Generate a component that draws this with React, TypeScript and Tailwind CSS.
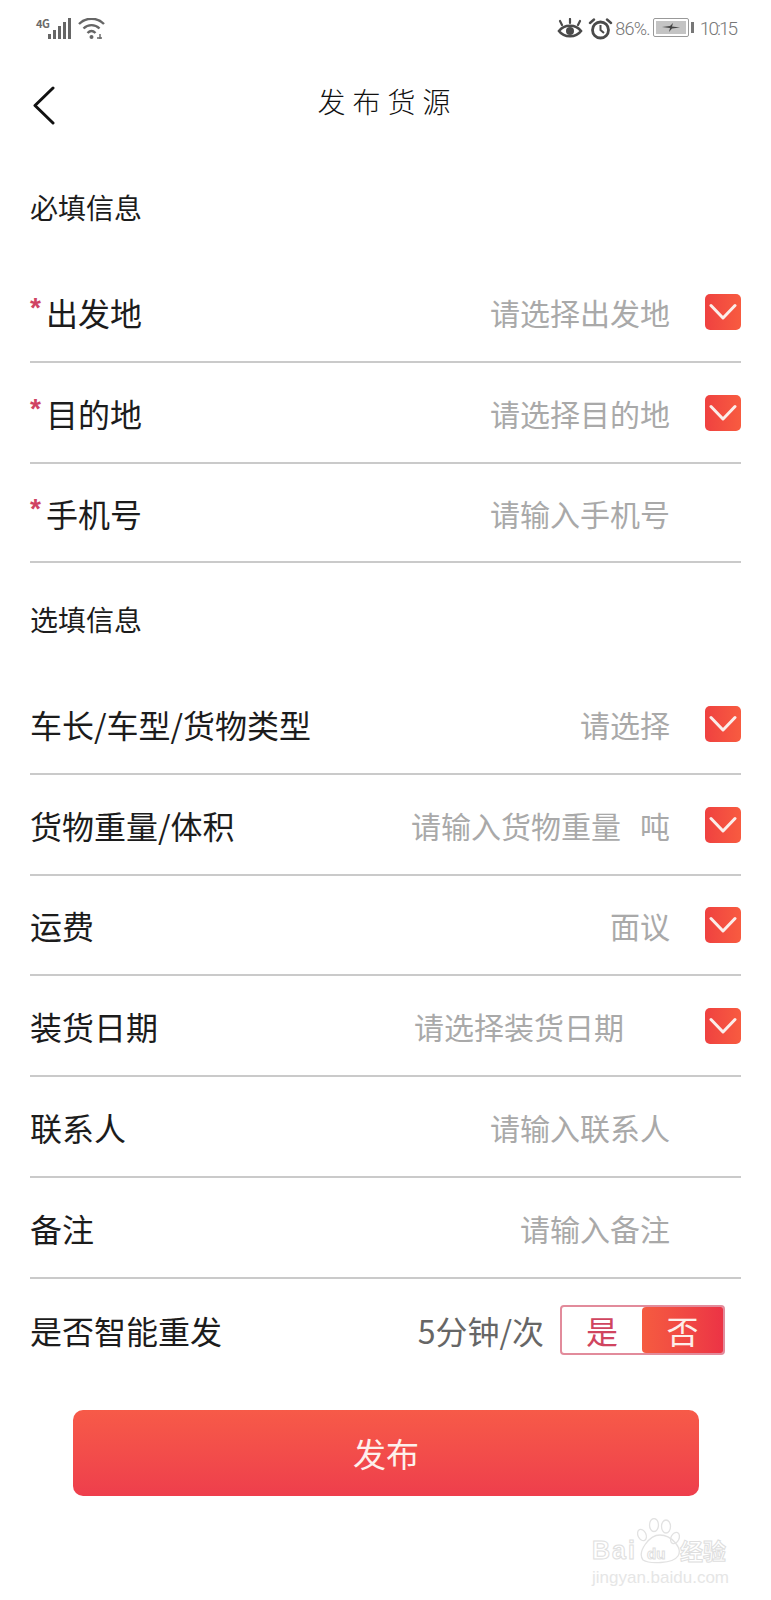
const font = { fontFamily: '"Noto Sans CJK SC", "Liberation Sans", sans-serif' }
const thin = { fontFamily: 'Roboto, "Liberation Sans", sans-serif' }

function Chevron() {
  return (
    <div className="ml-[35px] flex h-[36px] w-[36px] shrink-0 items-center justify-center rounded-[5px] bg-gradient-to-r from-[#ef4140] to-[#f85b40]">
      <svg width="28" height="18" viewBox="0 0 28 18" fill="none">
        <path d="M2 2.5 L14 15 L26 2.5" stroke="#fbeeea" strokeWidth="3" strokeLinecap="round" strokeLinejoin="round" />
      </svg>
    </div>
  )
}

function Row({
  label,
  required,
  hint,
  unit,
  arrow,
  hintClass,
  heightClass = "h-[101px]",
}: {
  label: string
  required?: boolean
  hint: string
  unit?: string
  arrow?: boolean
  hintClass?: string
  heightClass?: string
}) {
  return (
    <div className={`flex items-center border-b-2 border-[#cacaca] ${heightClass}`}>
      {required && (
        <span className="mt-[-8px] w-[16px] text-[28px] font-bold leading-none text-[#cf4463]" style={{ fontFamily: '"Liberation Sans", sans-serif' }}>
          *
        </span>
      )}
      <span className="text-[32px] leading-none text-[#1c1c1c]">{label}</span>
      <div className={`ml-auto flex items-center text-[30px] leading-none text-[#a9a9a9] ${arrow ? "" : "mr-[71px]"}`}>
        <span className={hintClass}>{hint}</span>
        {unit && <span className="ml-[19px]">{unit}</span>}
      </div>
      {arrow && <Chevron />}
    </div>
  )
}

function StatusBar() {
  return (
    <div className="flex h-[56px] items-start justify-between pl-[36px] pr-[35px] pt-[18px] text-[#6a6a6a]">
      <div className="flex items-start">
        <span className="mt-[-1px] w-[12px] text-[11px] font-bold leading-[12px] tracking-[-0.5px]">4G</span>
        <svg width="24" height="22" viewBox="0 0 24 22" fill="#666">
          <rect x="0" y="16" width="3" height="5" />
          <rect x="5" y="12" width="3" height="9" />
          <rect x="10" y="8" width="3" height="13" />
          <rect x="15" y="4" width="3" height="17" />
          <rect x="20" y="0" width="3" height="21" />
        </svg>
        <svg width="28" height="22" viewBox="0 0 28 22" fill="none" stroke="#666" strokeWidth="2.4" className="ml-[6px]">
          <path d="M1 6 C8 -1 19 -1 26 6" />
          <path d="M5.5 10.5 C10 6 17 6 21.5 10.5" />
          <path d="M9.5 15 C12 12.5 15 12.5 17.5 15" />
          <circle cx="13.5" cy="19" r="2" fill="#666" stroke="none" />
          <path d="M19 20 L24 20 M22 16 L22 21" strokeWidth="1.4" />
        </svg>
      </div>
      <div className="flex items-start">
        <svg width="26" height="22" viewBox="0 0 26 22" fill="none" stroke="#4a4a4a">
          <path d="M2 13 C7 6 19 6 24 13 C19 20 7 20 2 13 Z" strokeWidth="2.6" />
          <circle cx="13" cy="13" r="4" fill="#4a4a4a" stroke="none" />
          <path d="M5 7 L3 3 M13 5 L13 1 M21 7 L23 3" strokeWidth="2.2" strokeLinecap="round" />
        </svg>
        <svg width="25" height="22" viewBox="0 0 25 22" fill="none" stroke="#4a4a4a" strokeWidth="2.8" className="ml-[5px]">
          <circle cx="12.5" cy="12" r="8" />
          <path d="M12.5 7 L12.5 12 L16 15" strokeWidth="2" />
          <path d="M2 5 L6 1.5 M23 5 L19 1.5" strokeWidth="2.4" strokeLinecap="round" />
        </svg>
        <span className="ml-[2px] mt-[1px] w-[38px] text-[18px] font-light leading-[20px] tracking-[-0.8px] text-[#777]" style={thin}>
          86%.
        </span>
        <div className="flex items-center">
          <div className="flex h-[19px] w-[36px] items-center justify-center rounded-[2px] border border-[#999] p-[2px]">
            <div className="flex h-full w-full items-center justify-center bg-[#c4c4c4]">
              <svg width="18" height="9" viewBox="0 0 18 9" fill="#444">
                <path d="M0 4 L8 3 L11 0 L10 3.5 L18 4.5 L10 5.5 L7 9 L8 5 Z" />
              </svg>
            </div>
          </div>
          <div className="ml-[2px] h-[11px] w-[2.5px] bg-[#777]" />
        </div>
        <span className="ml-[6px] mt-[1px] text-[19px] font-light leading-[20px] tracking-[-2px] text-[#777]" style={thin}>
          10:15
        </span>
      </div>
    </div>
  )
}

function Watermark() {
  return (
    <div className="absolute left-[592px] top-[1518px] w-[140px]" style={{ fontFamily: '"Liberation Sans", sans-serif' }}>
      <svg width="48" height="46" viewBox="0 0 48 46" fill="none" stroke="#e2e2e2" strokeWidth="1.3" className="absolute left-[43px] top-0">
        <ellipse cx="7" cy="17" rx="4" ry="6" transform="rotate(-25 7 17)" />
        <ellipse cx="19" cy="7" rx="4.5" ry="6.5" />
        <ellipse cx="31" cy="8.5" rx="4.5" ry="6.5" />
        <ellipse cx="40" cy="20" rx="4" ry="6" transform="rotate(25 40 20)" />
        <path d="M8 42 C2 34 14 17 25 17 C36 17 48 30 43 38 C38 46 14 46 8 42 Z" />
      </svg>
      <div className="mt-[22px] flex h-[20px] items-center font-bold leading-none text-transparent [-webkit-text-stroke:1px_#dedede]">
        <span className="w-[55px] text-[25px] tracking-[2px]">Bai</span>
        <span className="w-[33px] pt-[6px] text-[15px]">du</span>
        <span className="text-[23px]" style={font}>经验</span>
      </div>
      <div className="mt-[8px] text-[17px] leading-[20px] text-[#e6e6e6]">jingyan.baidu.com</div>
    </div>
  )
}

export default function App() {
  return (
    <div className="relative h-[1600px] w-[771px] overflow-hidden bg-white" style={font}>
      <StatusBar />

      <div className="relative flex h-[92px] items-center justify-center">
        <svg width="26" height="40" viewBox="0 0 26 40" fill="none" className="absolute left-[31px] top-[30px]">
          <path d="M22 2 L4 19.5 L22 37" stroke="#111" strokeWidth="3" strokeLinecap="round" strokeLinejoin="round" />
        </svg>
        <span className="ml-[4px] mt-[-2px] text-[28px] font-extralight leading-none tracking-[7px] text-[#111]">发布货源</span>
      </div>

      <div className="px-[30px]">
        <div className="h-[114px] text-[28px] leading-[118px] text-[#1c1c1c]">必填信息</div>
        <Row label="出发地" required hint="请选择出发地" arrow />
        <Row label="目的地" required hint="请选择目的地" arrow />
        <Row label="手机号" required hint="请输入手机号" heightClass="h-[99px]" />
        <div className="h-[111px] text-[28px] leading-[112px] text-[#1c1c1c]">选填信息</div>
        <Row label="车长/车型/货物类型" hint="请选择" arrow />
        <Row label="货物重量/体积" hint="请输入货物重量" unit="吨" arrow />
        <Row label="运费" hint="面议" arrow heightClass="h-[100px]" />
        <Row label="装货日期" hint="请选择装货日期" hintClass="mr-[46px]" arrow />
        <Row label="联系人" hint="请输入联系人" />
        <Row label="备注" hint="请输入备注" />

        <div className="flex h-[101px] items-center">
          <span className="text-[32px] leading-none text-[#1c1c1c]">是否智能重发</span>
          <span className="ml-auto text-[32px] leading-none text-[#666]">5分钟/次</span>
          <div className="ml-[16px] mr-[16px] flex h-[50px] w-[165px] overflow-hidden rounded-[4px] border-2 border-[#e28b9b] text-[32px] leading-none">
            <div className="flex flex-1 items-center justify-center text-[#d0455f]">是</div>
            <div className="flex w-[81px] items-center justify-center rounded-l-[4px] bg-gradient-to-r from-[#f55b40] to-[#ec3345] text-[#fdeeea]">否</div>
          </div>
        </div>

        <button className="ml-[43px] mt-[30px] flex h-[86px] w-[626px] items-center justify-center rounded-[10px] bg-gradient-to-b from-[#f75a48] to-[#ee3e4c] text-[33px] leading-none text-[#fdf0ec]">
          发布
        </button>
      </div>

      <Watermark />
    </div>
  )
}
